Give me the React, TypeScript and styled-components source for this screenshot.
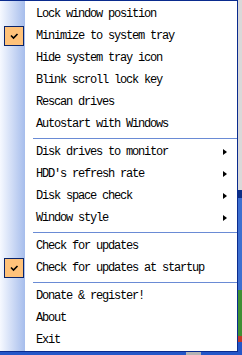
import React from "react";
import styled, { createGlobalStyle, css } from "styled-components";

const Global = createGlobalStyle`
  html, body { margin: 0; padding: 0; }
  body { width: 242px; height: 355px; overflow: hidden; background: #2456c8; }
`;

const Desktop = styled.div`
  width: 242px;
  height: 355px;
  overflow: hidden;
  background:
    linear-gradient(to right, #2456c8 0 186px, #b4b4b4 186px 201px, #2456c8 201px) left bottom / 100% 3px no-repeat,
    linear-gradient(to bottom, #d9d9d9 0 190px, #0c2f86 190px 198px, #3d6fd0 198px 290px, #3f8f34 290px 336px, #c0392b 336px 342px, #2456c8 342px) right top / 4px 100% no-repeat,
    #2456c8;
`;

const Menu = styled.div`
  width: 238px;
  box-sizing: border-box;
  border: 1px solid #0a2b8e;
  border-left: none;
  padding-top: 2px;
  display: flex;
  flex-direction: column;
  background: linear-gradient(to right, #f6f9ff 0, #a6bdec 25px, #ffffff 25px);
  font-family: "Liberation Mono", "DejaVu Sans Mono", monospace;
  font-size: 12px;
  letter-spacing: -1.2px;
  color: #000;
`;

const Item = styled.div`
  height: 22px;
  display: flex;
  align-items: center;
`;

const Mark = styled.span<{ $checked?: boolean }>`
  flex: none;
  width: 20px;
  height: 20px;
  box-sizing: border-box;
  margin: 0 12px 0 4px;
  display: flex;
  align-items: center;
  justify-content: center;
  ${(p) =>
    p.$checked &&
    css`
      border: 1px solid #0a246a;
      background: #ffc27a;
    `}
`;

const Label = styled.span`
  flex: 1;
  white-space: nowrap;
  line-height: 21px;
  padding-top: 1px;
`;

const Arrow = styled.span`
  flex: none;
  width: 0;
  height: 0;
  margin-right: 10px;
  border-left: 4px solid #000;
  border-top: 3.5px solid transparent;
  border-bottom: 3.5px solid transparent;
`;

const Separator = styled.div`
  height: 1px;
  margin: 3px 0 2px 33px;
  background: #6a8bd5;
`;

type Entry = { label: string; checked?: boolean; sub?: boolean } | "sep";

const entries: Entry[] = [
  { label: "Lock window position" },
  { label: "Minimize to system tray", checked: true },
  { label: "Hide system tray icon" },
  { label: "Blink scroll lock key" },
  { label: "Rescan drives" },
  { label: "Autostart with Windows" },
  "sep",
  { label: "Disk drives to monitor", sub: true },
  { label: "HDD's refresh rate", sub: true },
  { label: "Disk space check", sub: true },
  { label: "Window style", sub: true },
  "sep",
  { label: "Check for updates" },
  { label: "Check for updates at startup", checked: true },
  "sep",
  { label: "Donate & register!" },
  { label: "About" },
  { label: "Exit" },
];

const Check = () => (
  <svg width="18" height="18" viewBox="0 0 18 18">
    <polyline points="6,8.5 8.5,11 12.5,7" fill="none" stroke="#000" strokeWidth="1.6" />
  </svg>
);

export default function App() {
  return (
    <>
      <Global />
      <Desktop>
        <Menu>
          {entries.map((e, i) =>
            e === "sep" ? (
              <Separator key={i} />
            ) : (
              <Item key={i}>
                <Mark $checked={e.checked}>{e.checked && <Check />}</Mark>
                <Label>{e.label}</Label>
                {e.sub && <Arrow />}
              </Item>
            )
          )}
        </Menu>
      </Desktop>
    </>
  );
}
